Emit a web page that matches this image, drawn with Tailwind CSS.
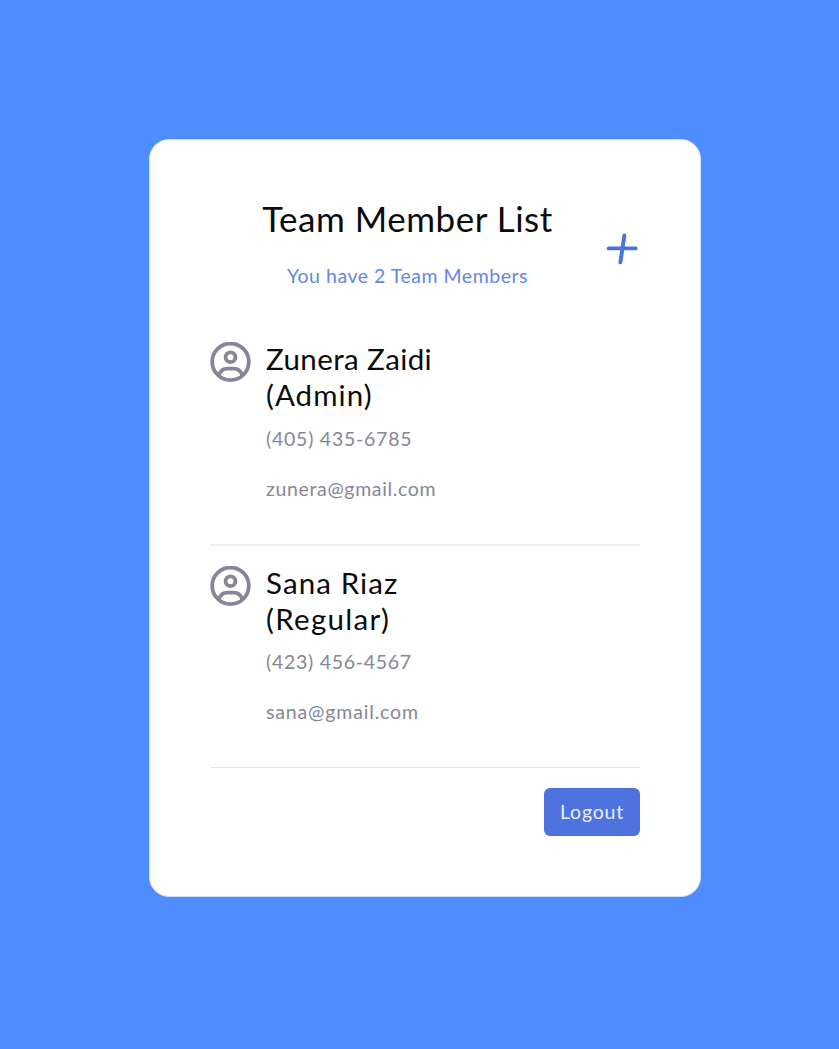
<!DOCTYPE html>
<html lang="en">
<head>
<meta charset="utf-8">
<title>Team Member List</title>
<script src="https://cdn.jsdelivr.net/npm/@tailwindcss/browser@4"></script>
</head>
<body class="h-[1049px] overflow-hidden bg-[#4f8cfd] pt-[139px] pl-[149px] font-['Lato',sans-serif] text-[#0b0b0b]">
<main class="flex h-[758px] w-[552px] flex-col rounded-[20px] border border-[#d3e0fb] bg-white px-[60px] pt-[57px]">
  <header class="flex h-[145px] justify-between">
    <div class="w-[395px] text-center">
      <h1 class="whitespace-nowrap text-[35px] leading-[42px] tracking-[0.52px]">Team Member List</h1>
      <p class="mt-[22px] whitespace-nowrap text-[19.5px] leading-[30px] tracking-[0.52px] text-[#6486e8]">You have 2 Team Members</p>
    </div>
    <button class="mt-[36px] mr-[2px] h-[32px] w-[32px] text-[#4b73dd]" aria-label="Add member">
      <svg class="h-8 w-8" viewBox="0 0 32 32" fill="none" stroke="currentColor" stroke-width="3.9" stroke-linecap="round"><path d="M2.6 15.4H29.6M18.4 2.4L14.4 29.3"/></svg>
    </button>
  </header>
  <section class="flex h-[204px] border-b-2 border-[#eeeef0]">
    <svg class="h-[41px] w-[41px] shrink-0" viewBox="0 0 41 41" fill="none" stroke="#858796" stroke-width="3.8"><circle cx="20.5" cy="19.8" r="18.3"/><circle cx="20.5" cy="15.2" r="4.9"/><path d="M8.7 33.5C10 29 13.3 26.6 17.5 26.6H23.5C27.7 26.6 31 29 32.3 33.5"/></svg>
    <div class="ml-[15px] whitespace-nowrap">
      <h2 class="-mt-px text-[29.5px] leading-[36px]"><span class="block tracking-[0.4px]">Zunera Zaidi</span><span class="block tracking-[1.05px]">(Admin)</span></h2>
      <p class="mt-[11px] text-[19.5px] leading-[30px] tracking-[0.75px] text-[#858796]">(405) 435-6785</p>
      <p class="mt-5 text-[19.5px] leading-[30px] tracking-[0.65px] text-[#858796]">zunera@gmail.com</p>
    </div>
  </section>
  <section class="mt-5 flex h-[202px] border-b border-[#e3e3e6]">
    <svg class="h-[41px] w-[41px] shrink-0" viewBox="0 0 41 41" fill="none" stroke="#858796" stroke-width="3.8"><circle cx="20.5" cy="19.8" r="18.3"/><circle cx="20.5" cy="15.2" r="4.9"/><path d="M8.7 33.5C10 29 13.3 26.6 17.5 26.6H23.5C27.7 26.6 31 29 32.3 33.5"/></svg>
    <div class="ml-[15px] whitespace-nowrap">
      <h2 class="-mt-px text-[29.5px] leading-[36px]"><span class="block tracking-[1.1px]">Sana Riaz</span><span class="block tracking-[1.3px]">(Regular)</span></h2>
      <p class="mt-[10px] text-[19.5px] leading-[30px] tracking-[0.72px] text-[#858796]">(423) 456-4567</p>
      <p class="mt-5 text-[19.5px] leading-[30px] tracking-[0.85px] text-[#858796]">sana@gmail.com</p>
    </div>
  </section>
  <button class="mt-5 h-12 w-[96px] self-end rounded-md bg-[#4e73df] text-[19.5px] tracking-[0.8px] text-[#e9eefc]">Logout</button>
</main>
</body>
</html>
